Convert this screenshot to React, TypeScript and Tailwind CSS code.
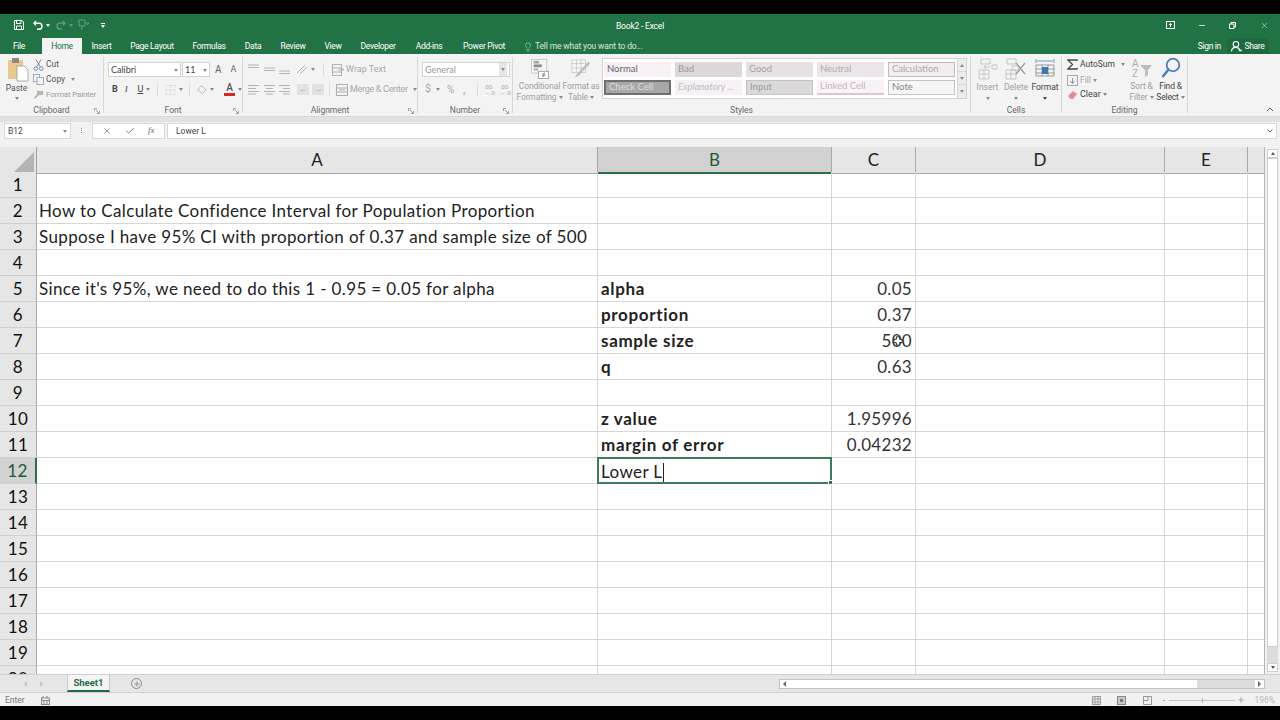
import { ReactNode } from "react";
import { Lightbulb, Plus, X, Check } from "lucide-react";

const ui = "font-['Roboto',sans-serif]";
const cal = "font-['Lato','Carlito',sans-serif]";

const tabs = [
  { name: "File", w: "w-[38px] mr-[4px]" },
  { name: "Home", w: "w-[40px]" },
  { name: "Insert", w: "w-[39px]" },
  { name: "Page Layout", w: "w-[62px]" },
  { name: "Formulas", w: "w-[52px]" },
  { name: "Data", w: "w-[36px]" },
  { name: "Review", w: "w-[44px]" },
  { name: "View", w: "w-[36px]" },
  { name: "Developer", w: "w-[54px]" },
  { name: "Add-ins", w: "w-[48px]" },
  { name: "Power Pivot", w: "w-[62px]" },
];

const rows: { n: number; a?: string; b?: string; c?: string }[] = [
  { n: 1 },
  { n: 2, a: "How to Calculate Confidence Interval for Population Proportion" },
  { n: 3, a: "Suppose I have 95% CI with proportion of 0.37 and sample size of 500" },
  { n: 4 },
  { n: 5, a: "Since it's 95%, we need to do this 1 - 0.95 = 0.05 for alpha", b: "alpha", c: "0.05" },
  { n: 6, b: "proportion", c: "0.37" },
  { n: 7, b: "sample size", c: "500" },
  { n: 8, b: "q", c: "0.63" },
  { n: 9 },
  { n: 10, b: "z value", c: "1.95996" },
  { n: 11, b: "margin of error", c: "0.04232" },
  { n: 12 },
  { n: 13 },
  { n: 14 },
  { n: 15 },
  { n: 16 },
  { n: 17 },
  { n: 18 },
  { n: 19 },
  { n: 20 },
];

function Caret({ className = "" }: { className?: string }) {
  return <span className={"inline-block h-0 w-0 shrink-0 border-x-[2.5px] border-t-[3px] border-x-transparent border-t-[#8a8a8a] " + className} />;
}

// paragraph alignment glyph, four short lines
function Lines({ align }: { align: "l" | "c" | "r" }) {
  const x = align === "l" ? [1, 1, 1, 1] : align === "c" ? [1, 3, 1, 3] : [1, 5, 1, 5];
  const w = align === "l" ? [11, 8, 11, 8] : [11, 7, 11, 7];
  return (
    <svg width="13" height="11" viewBox="0 0 13 11" stroke="#b4b4b4" strokeWidth="1">
      {[1.5, 4.5, 7.5, 10].map((y, i) => (
        <line key={y} x1={x[i]} x2={x[i] + w[i]} y1={y} y2={y} />
      ))}
    </svg>
  );
}

// vertical alignment glyph, two lines at top, middle or bottom
function VLines({ pos }: { pos: number }) {
  return (
    <svg width="13" height="11" viewBox="0 0 13 11" stroke="#b4b4b4" strokeWidth="1">
      <line x1="1" x2="12" y1={pos} y2={pos} />
      <line x1="1" x2="12" y1={pos + 2.5} y2={pos + 2.5} />
    </svg>
  );
}

function Group({ w, label, launcher = true, children }: { w: string; label: string; launcher?: boolean; children: ReactNode }) {
  return (
    <div className={"my-[3px] flex shrink-0 flex-col border-r border-[#d8d8d8] " + w}>
      <div className="h-[47px] shrink-0 whitespace-nowrap">{children}</div>
      <div className="relative mt-[1px] text-center text-[8.5px] leading-[10px] text-[#666]">
        {label}
        {launcher && (
          <svg className="absolute right-[3px] top-[3px]" width="6" height="6" viewBox="0 0 6 6" fill="none" stroke="#8a8a8a" strokeWidth="0.8">
            <path d="M0.5 3V0.5H3M2 2l3 3M5.5 3v2.5H3" />
          </svg>
        )}
      </div>
    </div>
  );
}

function Combo({ w, text, faded }: { w: string; text: string; faded?: boolean }) {
  return (
    <div className={"flex h-[15px] items-center justify-between border border-[#d4d4d4] bg-white pl-[2px] pr-[2px] text-[8.5px] " + w + (faded ? " text-[#9a9a9a]" : " text-[#444]")}>
      <span className={cal + " text-[9px]"}>{text}</span>
      <span className={faded ? "flex h-full w-[8px] items-center justify-center bg-[#e6e6e6]" : ""}>
        <Caret />
      </span>
    </div>
  );
}

function BigLabel({ l1, l2, muted = true, caret = false, w }: { l1: string; l2: string; muted?: boolean; caret?: boolean; w: string }) {
  return (
    <div className={"text-center text-[8.5px] leading-[11px] tracking-[-0.15px] " + w + (muted ? " text-[#a0a0a0]" : " text-[#444]")}>
      <div className="whitespace-nowrap">{l1}</div>
      <div className="flex items-center justify-center gap-[2px] whitespace-nowrap">
        {l2}
        {caret && <Caret />}
      </div>
    </div>
  );
}

function StyleCell({ text, cls }: { text: string; cls: string }) {
  return <div className={"flex h-[15px] w-[67px] items-center overflow-hidden whitespace-nowrap pl-[3px] text-[9.5px] " + cal + " " + cls}>{text}</div>;
}

function Ribbon() {
  return (
    <div className={"flex h-[62px] bg-[#f3f3f3] text-[8.5px] " + ui}>
      {/* clipboard */}
      <Group w="w-[104px]" label="Clipboard">
        <div className="flex">
          <div className="flex w-[33px] flex-col items-center">
            <svg width="22" height="25" viewBox="0 0 22 25" className="ml-[2px]">
              <rect x="1" y="3" width="15" height="19" rx="1" fill="#e9c88f" />
              <rect x="5" y="1" width="7" height="5" fill="#8a8a8a" />
              <path d="M10 9h7l4 4v11H10z" fill="#fff" stroke="#9a9a9a" strokeWidth="0.8" />
            </svg>
            <div className="mt-[1px] leading-[10px] text-[#555]">Paste</div>
            <Caret className="mt-[4px]" />
          </div>
          <div className="pt-[1px] text-[#555]">
            <div className="flex h-[13px] items-center gap-[2px]">
              <svg width="11" height="12" viewBox="0 0 11 12" fill="none" stroke="#7a7a7a" strokeWidth="0.9">
                <path d="M3 0.5l4 7M8 0.5l-4 7" />
                <circle cx="2.8" cy="9.5" r="1.8" stroke="#5a7fa8" />
                <circle cx="8.2" cy="9.5" r="1.8" stroke="#5a7fa8" />
              </svg>
              Cut
            </div>
            <div className="mt-[2px] flex h-[13px] items-center gap-[2px]">
              <svg width="11" height="11" viewBox="0 0 11 11" fill="#f4f4f4" stroke="#8a9ab0" strokeWidth="0.8">
                <rect x="0.5" y="0.5" width="6" height="7" />
                <rect x="4" y="3.5" width="6.5" height="7" />
              </svg>
              Copy
              <Caret className="ml-[4px]" />
            </div>
            <div className="mt-[2px] flex h-[13px] items-center gap-[2px] text-[8px] tracking-[-0.2px] text-[#a0a0a0]">
              <svg width="11" height="10" viewBox="0 0 11 10" fill="#b5b5b5">
                <path d="M4 1h6v4H6L2 9 1 8l3-4z" />
              </svg>
              Format Painter
            </div>
          </div>
        </div>
      </Group>
      {/* font */}
      <Group w="w-[139px]" label="Font">
        <div className="pl-[4px] pt-[5px]">
          <div className="flex items-center">
            <Combo w="w-[73px]" text="Calibri" />
            <Combo w="w-[28px] ml-[1px]" text="11" />
            <span className="ml-[5px] text-[10px] text-[#666]">A</span>
            <span className="ml-[9px] text-[9px] text-[#666]">A</span>
          </div>
          <div className="mt-[5px] flex h-[15px] items-center text-[9px] text-[#444]">
            <b className="ml-[4px] w-[14px] font-bold">B</b>
            <i className="w-[14px] font-['Liberation_Serif',serif]">I</i>
            <u className="w-[10px]">U</u>
            <Caret />
            <span className="mx-[7px] h-[13px] w-px bg-[#dcdcdc]" />
            <svg width="12" height="12" viewBox="0 0 12 12" stroke="#d0d0d0" fill="none">
              <path d="M1 1h10v10H1zM1 6h10M6 1v10" strokeDasharray="1 1" />
            </svg>
            <Caret className="ml-[3px]" />
            <span className="mx-[6px] h-[13px] w-px bg-[#dcdcdc]" />
            <svg width="13" height="13" viewBox="0 0 13 13" fill="none" stroke="#b5b5b5">
              <path d="M2 7l4-5 5 5-4 4z" />
            </svg>
            <Caret className="ml-[2px]" />
            <span className="ml-[10px] flex flex-col items-center text-[10px] font-medium leading-[10px] text-[#555]">
              A<span className="h-[3px] w-[11px] bg-[#d12a2a]" />
            </span>
            <Caret className="ml-[3px]" />
          </div>
        </div>
      </Group>
      {/* alignment */}
      <Group w="w-[175px]" label="Alignment">
        <div className="pl-[4px] pt-[5px] text-[#a8a8a8]">
          <div className="flex h-[15px] items-center">
            <span className="flex w-[46px] justify-between pr-[2px]">
              <VLines pos={1} />
              <VLines pos={4} />
              <VLines pos={7} />
            </span>
            <svg className="ml-[3px]" width="12" height="12" viewBox="0 0 12 12" fill="none" stroke="#b0b0b0">
              <path d="M1 9l8-8M4 10l7-7" />
            </svg>
            <Caret className="ml-[3px]" />
            <span className="mx-[8px] h-[13px] w-px bg-[#dcdcdc]" />
            <svg width="13" height="12" viewBox="0 0 13 12" fill="none" stroke="#b0b0b0">
              <rect x="0.5" y="0.5" width="9" height="11" />
              <path d="M0.5 4h9M0.5 8h9M6 6h6l-2-2" />
            </svg>
            <span className="ml-[1px] text-[9px]">Wrap Text</span>
          </div>
          <div className="mt-[5px] flex h-[15px] items-center">
            <span className="flex w-[46px] justify-between pr-[2px]">
              <Lines align="l" />
              <Lines align="c" />
              <Lines align="r" />
            </span>
            <span className="ml-[4px] flex gap-[3px] text-[#999]">
              <span className="flex h-[11px] w-[12px] items-center justify-center bg-[#e2e2e2] text-[8px] leading-none">←</span>
              <span className="flex h-[11px] w-[12px] items-center justify-center bg-[#e2e2e2] text-[8px] leading-none">→</span>
            </span>
            <span className="ml-[5px] mr-[6px] h-[13px] w-px bg-[#dcdcdc]" />
            <svg width="13" height="12" viewBox="0 0 13 12" fill="none" stroke="#b0b0b0">
              <rect x="0.5" y="0.5" width="11" height="11" />
              <path d="M0.5 4h11M0.5 8h11M3 6h6" />
            </svg>
            <span className="ml-[1px] text-[9px] tracking-[-0.3px]">Merge &amp; Center</span>
            <Caret className="ml-[5px]" />
          </div>
        </div>
      </Group>
      {/* number */}
      <Group w="w-[95px]" label="Number">
        <div className="pl-[4px] pt-[5px] text-[#a8a8a8]">
          <Combo w="w-[88px]" text="General" faded />
          <div className="mt-[5px] flex h-[15px] items-center pl-[3px]">
            <span className="w-[11px] text-[11px]">$</span>
            <Caret />
            <span className="ml-[7px] w-[16px] text-[10px]">%</span>
            <span className="w-[14px] text-[10px] font-bold leading-[8px]">,</span>
            <span className="mr-[6px] h-[13px] w-px bg-[#dcdcdc]" />
            <span className="w-[15px] text-[6px] leading-[6px]">.00<br />→.0</span>
            <span className="ml-[1px] text-[6px] leading-[6px]">.00<br />←.0</span>
          </div>
        </div>
      </Group>
      {/* styles */}
      <Group w="w-[458px]" label="Styles" launcher={false}>
        <div className="flex">
          <div className="flex pl-[3px]">
            <div className="flex w-[47px] flex-col items-center pt-[2px]">
              <svg width="20" height="20" viewBox="0 0 20 22" fill="none" stroke="#bcbcbc" strokeWidth="0.8">
                <rect x="0.5" y="0.5" width="17" height="15" fill="#f5f5f5" />
                <rect x="3" y="2" width="6" height="3" fill="#a8a8a8" stroke="none" />
                <rect x="3" y="6" width="9" height="3" fill="#8e8e8e" stroke="none" />
                <rect x="3" y="10" width="5" height="3" fill="#bdbdbd" stroke="none" />
                <rect x="8.5" y="13.5" width="11" height="8" fill="#fff" stroke="#888" />
                <path d="M12 16.5h4M12 18.5h4M15 15l-2 5" stroke="#777" />
              </svg>
              <BigLabel w="mt-[2px]" l1="Conditional" l2="Formatting" caret />
            </div>
            <div className="flex w-[36px] flex-col items-center pt-[2px]">
              <svg width="20" height="20" viewBox="0 0 22 22" fill="none" stroke="#c4c4c4" strokeWidth="0.8">
                <rect x="1" y="1" width="15" height="14" fill="#f6f6f6" />
                <path d="M1 5h15M1 10h15M6 1v14M11 1v14" />
                <path d="M21 5L9 18l-5 3 3-5L19 3z" fill="#bdbdbd" stroke="none" />
              </svg>
              <BigLabel w="mt-[2px]" l1="Format as" l2="Table" caret />
            </div>
          </div>
          <div className="ml-[3px] mt-[1px] flex h-[41px] w-[365px] border border-[#d2d2d2] bg-white pl-[1px]">
            <div className="grid w-[353px] grid-cols-[67px_67px_67px_67px_67px] content-start gap-x-[4px] gap-y-[3px] pt-[3px]">
              <StyleCell text="Normal" cls="bg-[#f7f0f5] text-[#666]" />
              <StyleCell text="Bad" cls="bg-[#dcd8da] text-[#9a9a9a]" />
              <StyleCell text="Good" cls="bg-[#e6e2e4] text-[#a2a2a2]" />
              <StyleCell text="Neutral" cls="bg-[#ebe4e9] text-[#b0b0b0]" />
              <StyleCell text="Calculation" cls="border border-[#bdbdbd] bg-[#f2edf0] text-[#aaa]" />
              <StyleCell text="Check Cell" cls="border-2 border-[#6f6f6f] bg-[#a8a8a8] text-[#dedede]" />
              <StyleCell text="Explanatory ..." cls="bg-[#f7f0f5] italic text-[#bdbdbd]" />
              <StyleCell text="Input" cls="border border-[#c4c4c4] bg-[#dcd9db] text-[#9a9a9a]" />
              <StyleCell text="Linked Cell" cls="border-b-2 border-[#dcc5d2] bg-[#f8f1f6] text-[#c8b4c0]" />
              <StyleCell text="Note" cls="border border-[#c4c4c4] bg-[#f6f6f6] text-[#888]" />
            </div>
            <div className="ml-auto flex w-[9px] flex-col border-l border-[#d6d6d6] bg-[#ececec]">
              <span className="flex h-[13px] items-center justify-center border-b border-[#d6d6d6]"><Caret className="rotate-180" /></span>
              <span className="flex h-[13px] items-center justify-center border-b border-[#d6d6d6]"><Caret /></span>
              <span className="flex h-[13px] items-center justify-center"><Caret /></span>
            </div>
          </div>
        </div>
      </Group>
      {/* cells */}
      <Group w="w-[91px]" label="Cells" launcher={false}>
        <div className="flex pl-[2px] pt-[1px]">
          <div className="flex w-[29px] flex-col items-center text-[#a0a0a0]">
            <svg width="20" height="22" viewBox="0 0 20 22" fill="none" stroke="#bbb" strokeWidth="0.8">
              <path d="M3 1h9v5H3zM1 12h10v9H1zM1 16h10M6 12v9M14 7h5v4h-5zM12 9H6M8 7l-2 2 2 2" />
            </svg>
            <div className="mt-[2px] leading-[11px]">Insert</div>
            <Caret className="mt-[4px]" />
          </div>
          <div className="flex w-[28px] flex-col items-center text-[#a0a0a0]">
            <svg width="22" height="22" viewBox="0 0 22 22" fill="none" stroke="#bbb" strokeWidth="0.8">
              <path d="M2 1h9v5H2zM1 12h10v9H1zM1 16h10M6 12v9M7 8h7v4H7z" />
              <path d="M11 5l9 11M20 5l-9 11" stroke="#9a9a9a" strokeWidth="1.2" />
            </svg>
            <div className="mt-[2px] leading-[11px]">Delete</div>
            <Caret className="mt-[4px]" />
          </div>
          <div className="flex w-[30px] flex-col items-center text-[#444]">
            <svg width="20" height="22" viewBox="0 0 20 22" fill="none" stroke="#777" strokeWidth="0.7">
              <path d="M1 1v4M19 1v4M2 3h16" stroke="#3c78b5" />
              <path d="M1 7h18v11H1zM1 11h18M1 15h18M7 7v11M13 7v11" />
              <rect x="7" y="9" width="6" height="7" fill="#3c78b5" stroke="none" />
            </svg>
            <div className="mt-[2px] leading-[11px]">Format</div>
            <Caret className="mt-[4px] border-t-[#444]" />
          </div>
        </div>
      </Group>
      {/* editing */}
      <Group w="w-[126px]" label="Editing" launcher={false}>
        <div className="flex pl-[5px]">
          <div className="w-[60px] pt-[1px] text-[#444]">
            <div className="flex h-[13px] items-center gap-[2px]">
              <svg width="11" height="11" viewBox="0 0 11 11" fill="none" stroke="#444" strokeWidth="1.3">
                <path d="M10 2V1H1l4.5 4.5L1 10h9V9" />
              </svg>
              <span>AutoSum</span>
              <Caret className="ml-[4px]" />
            </div>
            <div className="mt-[3px] flex h-[13px] items-center gap-[2px] text-[#a8a8a8]">
              <svg width="11" height="11" viewBox="0 0 11 11" fill="none" stroke="#a8a8a8">
                <rect x="0.5" y="0.5" width="10" height="10" />
                <path d="M5.5 3v5M3 6l2.5 2.5L8 6" stroke="#6f9ac2" />
              </svg>
              Fill
              <Caret />
            </div>
            <div className="mt-[1px] flex h-[13px] items-center gap-[2px]">
              <svg width="11" height="10" viewBox="0 0 11 10">
                <path d="M1 6l5-5 4 3-4 5H3z" fill="#e88a9c" />
                <path d="M1 6l3 3H3z" fill="#ddd" />
              </svg>
              <span className="text-[9px]">Clear</span>
              <Caret />
            </div>
          </div>
          <div className="flex w-[29px] flex-col items-center text-[#a0a0a0]">
            <svg width="22" height="22" viewBox="0 0 22 22">
              <path d="M9 8h12l-4 5v5l-3 2v-7z" fill="#bdbdbd" />
              <text x="1" y="10" fontSize="10" fill="#b0b0b0">A</text>
              <text x="1" y="20" fontSize="10" fill="#b0b0b0">Z</text>
            </svg>
            <BigLabel w="mt-[2px]" l1="Sort &" l2="Filter" caret />
          </div>
          <div className="flex w-[29px] flex-col items-center text-[#444]">
            <svg width="20" height="22" viewBox="0 0 20 22" fill="none" stroke="#4a7fb5" strokeWidth="1.8">
              <circle cx="12" cy="8" r="6.3" />
              <path d="M7.5 12.5L1.5 20" strokeWidth="2.4" />
            </svg>
            <BigLabel w="mt-[2px]" l1="Find &" l2="Select" muted={false} caret />
          </div>
        </div>
      </Group>
      <div className="flex flex-1 items-end justify-end pb-[4px] pr-[6px]">
        <svg width="8" height="5" viewBox="0 0 8 5" fill="none" stroke="#555" strokeWidth="1">
          <path d="M1 4l3-3 3 3" />
        </svg>
      </div>
    </div>
  );
}

function FormulaBar() {
  return (
    <div className={"flex h-[31px] flex-col bg-[#e6e6e6] " + ui}>
      <div className="h-[6px] border-t border-[#d8d8d8] bg-[#e2e2e2]" />
      <div className="flex h-[25px] items-start bg-[#f1f1f1] pt-[1px] text-[8.5px] text-[#444]">
        <div className="ml-[4px] flex h-[16px] w-[67px] items-center justify-between border border-[#d8d8d8] bg-white px-[3px]">
          B12
          <Caret />
        </div>
        <div className="flex w-[21px] flex-col items-center gap-[1px] pt-[5px]">
          <span className="h-[1px] w-[1px] bg-[#999]" />
          <span className="h-[1px] w-[1px] bg-[#999]" />
          <span className="h-[1px] w-[1px] bg-[#999]" />
        </div>
        <div className="flex h-[16px] w-[73px] items-center justify-around border border-[#d8d8d8] bg-white px-[3px] text-[#666]">
          <X size={10} strokeWidth={1.5} />
          <Check size={10} strokeWidth={2} />
          <i className="font-['Liberation_Serif',serif] text-[9px]">fx</i>
        </div>
        <div className="ml-[2px] mr-[3px] flex h-[16px] flex-1 items-center justify-between border border-[#d8d8d8] bg-white pl-[8px] pr-[3px] text-[8.5px]">
          Lower L
          <svg width="6" height="4" viewBox="0 0 6 4" fill="none" stroke="#666">
            <path d="M0.5 0.5L3 3l2.5-2.5" />
          </svg>
        </div>
      </div>
    </div>
  );
}

const cols = "grid grid-cols-[37px_561px_234px_84px_249px_83px_17px]";
const gridLine = "border-r border-b border-[#d6d6d6]";

function Sheet() {
  return (
    <div className="flex h-[527px] bg-white">
      <div className={"h-full w-[1265px] overflow-hidden border-r border-[#b5b5b5] text-[#222] " + cal}>
        <div className={cols + " h-[25px] text-[17px] leading-[25px] text-[#222]"}>
          <div className="flex items-end justify-end border-b border-r border-[#a0a0a0] bg-[#e6e6e6] pb-[1px] pr-[2px]">
            <span className="h-0 w-0 border-b-[20px] border-l-[20px] border-b-[#b4b4b4] border-l-transparent" />
          </div>
          <div className="border-b border-r border-[#a8a8a8] bg-[#e6e6e6] text-center">A</div>
          <div className="border-b-2 border-r border-[#2a6e4a] border-r-[#a8a8a8] bg-[#d2d2d2] text-center text-[#1c5c3a]">B</div>
          <div className="border-b border-r border-[#a8a8a8] bg-[#e6e6e6] text-center">C</div>
          <div className="border-b border-r border-[#a8a8a8] bg-[#e6e6e6] text-center">D</div>
          <div className="border-b border-r border-[#a8a8a8] bg-[#e6e6e6] text-center">E</div>
          <div className="border-b border-[#a8a8a8] bg-[#e6e6e6]" />
        </div>
        {rows.map((r) => (
          <div key={r.n} className={cols + " h-[26px] text-[17px] leading-[24px]"}>
            <div className={"border-b border-[#cfcfcf] pt-[1px] text-center tracking-[0.5px] " + (r.n === 12 ? "border-r-2 border-r-[#2a6e4a] bg-[#d2d2d2] text-[#1c5c3a]" : "border-r border-r-[#a8a8a8] bg-[#e6e6e6] text-[#111]")}>{r.n}</div>
            <div className={gridLine + " whitespace-nowrap pl-[2px] pt-[1px] tracking-[0.37px]"}>{r.a}</div>
            {r.n === 12 ? (
              <div className="relative z-10 -ml-[1px] -mt-[1px] h-[27px] w-[235px] border-2 border-[#3f7a5c] bg-white pl-[2px] leading-[22px] tracking-[0.39px] text-[#222]">
                Lower L<span className="ml-[1px] inline-block h-[19px] w-px translate-y-[4px] bg-[#222]" />
                <span className="absolute -bottom-[3px] -right-[3px] h-[5px] w-[5px] border border-white bg-[#2a6e4a]" />
              </div>
            ) : (
              <div className={gridLine + " pl-[3px] pt-[1px] font-bold tracking-[0.67px]"}>{r.b}</div>
            )}
            <div className={gridLine + " relative pr-[3px] pt-[1px] text-right tracking-[0.3px] text-[#333]"}>
              {r.c}
              {r.n === 7 && (
                <svg className="absolute left-[61px] top-[8px]" width="10" height="10" viewBox="0 0 12 12" fill="#fff" stroke="#222" strokeWidth="1.2">
                  <path d="M4 1h4v3h3v4H8v3H4V8H1V4h3z" />
                </svg>
              )}
            </div>
            <div className={gridLine} />
            <div className={gridLine} />
            <div className="border-b border-[#d6d6d6]" />
          </div>
        ))}
      </div>
      <div className="flex w-[15px] flex-col items-center bg-[#f1f1f1] py-[2px]">
        <div className="flex h-[9px] w-[11px] items-center justify-center border border-[#cfcfcf] bg-white"><Caret className="rotate-180 border-t-[#555]" /></div>
        <div className="flex w-[11px] flex-1 flex-col bg-[#dcdcdc]">
          <div className="h-[489px] border border-[#cfcfcf] bg-white" />
        </div>
        <div className="flex h-[9px] w-[11px] items-center justify-center border border-[#cfcfcf] bg-white"><Caret className="border-t-[#555]" /></div>
      </div>
    </div>
  );
}

function SheetBar() {
  return (
    <div className={"flex h-[19px] border-y border-[#d0d0d0] bg-[#e6e6e6] " + ui}>
      <div className="flex w-[67px] items-center justify-center gap-[13px]">
        <span className="h-0 w-0 border-y-[3px] border-r-[3px] border-y-transparent border-r-[#c4c4c4]" />
        <span className="h-0 w-0 border-y-[3px] border-l-[3px] border-y-transparent border-l-[#c4c4c4]" />
      </div>
      <div className="flex h-[17px] w-[43px] items-center justify-center border-b-2 border-x border-[#1f6b46] border-x-[#c8c8c8] bg-[#f4f4f4] pt-[1px] text-[9.5px] font-bold text-[#2a6e4a]">
        Sheet1
      </div>
      <div className="ml-[21px] flex h-[17px] items-center">
        <span className="flex h-[11px] w-[11px] items-center justify-center rounded-full border border-[#8a8a8a]">
          <Plus size={8} strokeWidth={2} className="text-[#777]" />
        </span>
      </div>
      <div className="ml-[637px] mt-[4px] flex h-[10px] w-[486px] border border-[#c4c4c4] bg-[#dcdcdc]">
        <div className="flex w-[9px] items-center justify-center bg-white"><span className="h-0 w-0 border-y-[3px] border-r-[3px] border-y-transparent border-r-[#666]" /></div>
        <div className="w-[408px] bg-white" />
        <div className="flex-1" />
        <div className="flex w-[9px] items-center justify-center bg-white"><span className="h-0 w-0 border-y-[3px] border-l-[3px] border-y-transparent border-l-[#666]" /></div>
      </div>
    </div>
  );
}

function StatusBar() {
  return (
    <div className={"flex h-[13px] items-center bg-[#f1f1f1] pt-[1px] text-[8.5px] text-[#777] " + ui}>
      <span className="ml-[5px]">Enter</span>
      <svg className="ml-[16px]" width="9" height="9" viewBox="0 0 9 9" fill="none" stroke="#888">
        <rect x="0.5" y="2" width="8" height="6.5" />
        <path d="M0.5 4.5h8M3 4.5v4M6 4.5v4M2 0v2M6 0v2" />
      </svg>
      <div className="ml-auto flex items-center">
        <svg width="9" height="9" viewBox="0 0 9 9" fill="none" stroke="#9a9a9a">
          <path d="M0.5 0.5h8v8h-8zM3 0.5v8M6 0.5v8M0.5 3h8M0.5 6h8" />
        </svg>
        <span className="ml-[16px] flex h-[9px] w-[9px] items-center justify-center border border-[#888] bg-[#c8c8c8]"><span className="h-[3px] w-[3px] bg-[#777]" /></span>
        <svg className="ml-[17px]" width="9" height="9" viewBox="0 0 9 9" fill="none" stroke="#9a9a9a">
          <path d="M0.5 0.5h8v8h-8zM5 0.5v4H0.5" />
        </svg>
        <span className="ml-[11px] text-[#888]">-</span>
        <span className="relative ml-[4px] h-px w-[66px] bg-[#c4c4c4]">
          <span className="absolute left-[33px] -top-[2px] h-[5px] w-px bg-[#b5b5b5]" />
        </span>
        <Plus size={8} strokeWidth={2} className="ml-[2px] text-[#888]" />
        <span className="ml-[9px] mr-[5px] text-[#b5b5b5]">196%</span>
      </div>
    </div>
  );
}

export default function App() {
  return (
    <div className="flex h-screen w-full flex-col overflow-hidden bg-black">
      <div className="h-[14px] shrink-0" />
      {/* title bar */}
      <div className={"relative flex h-[22px] shrink-0 items-center bg-[#217346] text-white " + ui}>
        <svg className="ml-[14px]" width="10" height="10" viewBox="0 0 10 10" fill="none" stroke="#fff" strokeWidth="1">
          <path d="M0.5 0.5h7.5l1.5 1.5v7.5h-9zM2.5 0.5v3h4.5v-3M2.5 9.5v-3.5h5v3.5" />
        </svg>
        <svg className="ml-[9px]" width="10" height="10" viewBox="0 0 10 10" fill="none" stroke="#fff" strokeWidth="1.4">
          <path d="M3 1L1 3.2l2 2.2M1 3.2h5a3 3 0 0 1 0 6H4" />
        </svg>
        <Caret className="ml-[3px] border-t-white" />
        <svg className="ml-[6px] opacity-30" width="10" height="10" viewBox="0 0 10 10" fill="none" stroke="#fff" strokeWidth="1.2">
          <path d="M7 1l2 2.2-2 2.2M9 3.2H4a3 3 0 0 0 0 6h2" />
        </svg>
        <Caret className="ml-[3px] border-t-white opacity-30" />
        <svg className="ml-[5px] opacity-30" width="12" height="12" viewBox="0 0 12 12" fill="none" stroke="#fff" strokeWidth="1">
          <path d="M1 1h6v6H1zM7 4h4l-2 2M4 7v4" />
        </svg>
        <span className="ml-[11px] flex flex-col items-center gap-[1px]">
          <span className="h-px w-[4px] bg-white" />
          <Caret className="border-t-white" />
        </span>
        <div className="absolute inset-x-0 top-[7px] text-center text-[8.5px] leading-[10px] tracking-[-0.2px]">Book2 - Excel</div>
        <div className="ml-auto flex items-center">
          <svg width="9" height="8" viewBox="0 0 9 8" fill="none" stroke="#fff">
            <rect x="0.5" y="0.5" width="8" height="7" />
            <path d="M4.5 6V2.5M3 4l1.5-1.5L6 4" />
          </svg>
          <span className="ml-[24px] h-px w-[6px] bg-white opacity-70" />
          <svg className="ml-[24px]" width="7" height="7" viewBox="0 0 7 7" fill="none" stroke="#fff">
            <path d="M0.5 2h4.5v4.5H0.5zM2 2V0.5h4.5V5H5" />
          </svg>
          <X className="ml-[24px] mr-[11px]" size={9} strokeWidth={1.2} />
        </div>
      </div>
      {/* tabs */}
      <div className={"flex h-[18px] shrink-0 items-end bg-[#217346] text-[8.5px] tracking-[-0.3px] text-white " + ui}>
        {tabs.map((t) => (
          <div key={t.name} className={"flex h-[16px] items-center justify-center whitespace-nowrap pt-[1px] " + t.w + (t.name === "Home" ? " bg-[#f3f3f3] text-[#217346]" : "")}>
            {t.name}
          </div>
        ))}
        <div className="ml-[8px] flex h-[16px] items-center gap-[2px] pt-[1px] tracking-[-0.15px] text-[#d5e6dc]">
          <Lightbulb size={10} strokeWidth={1.3} />
          <span>Tell me what you want to do...</span>
        </div>
        <div className="ml-auto flex h-[16px] items-center pt-[1px]">
          <span>Sign in</span>
          <div className="-mt-[1px] ml-[6px] mr-[11px] flex h-[16px] w-[42px] items-center justify-center gap-[2px] bg-[#1e6a40]">
            <svg width="11" height="11" viewBox="0 0 10 10" fill="none" stroke="#fff">
              <circle cx="4.5" cy="3" r="2.5" />
              <path d="M0.5 9.5c0-5 7-5 8 0M7 8.5h3" />
            </svg>
            Share
          </div>
        </div>
      </div>
      <div className="shrink-0"><Ribbon /></div>
      <div className="shrink-0"><FormulaBar /></div>
      <div className="shrink-0"><Sheet /></div>
      <div className="shrink-0"><SheetBar /></div>
      <div className="shrink-0"><StatusBar /></div>
    </div>
  );
}
